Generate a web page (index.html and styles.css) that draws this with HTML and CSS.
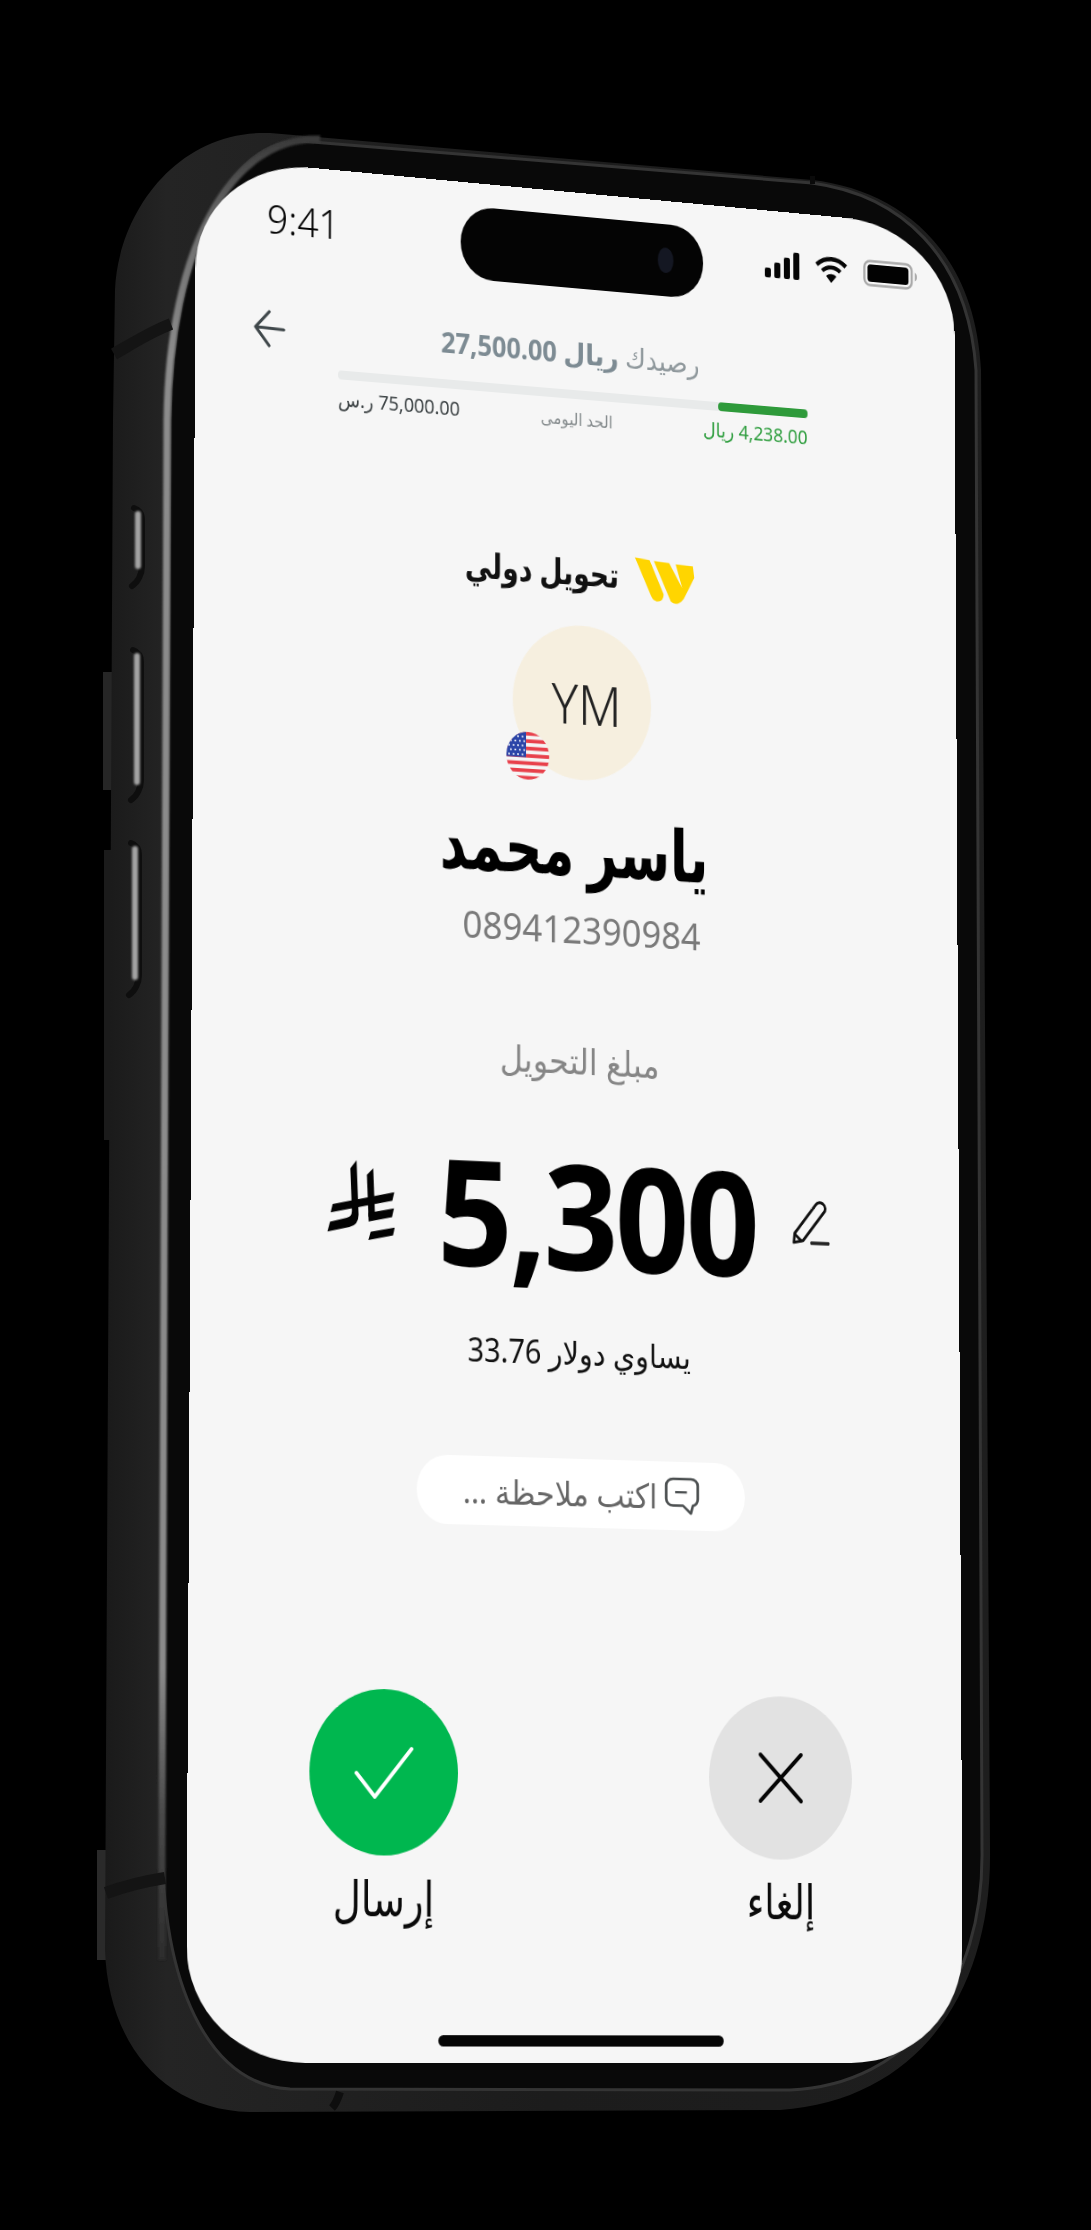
FILE: index.html
```html
<!DOCTYPE html>
<html lang="ar">
<head>
<meta charset="utf-8">
<title>تحويل دولي</title>
<link rel="stylesheet" href="styles.css">
</head>
<body>
<main class="stage">
  <svg class="shell" viewBox="0 0 1091 2230" width="1091" height="2230" aria-hidden="true">
    <defs>
      <linearGradient id="bodyGrad" x1="0" y1="0" x2="1" y2="0">
        <stop offset="0" stop-color="#1a1a1a"/>
        <stop offset="0.07" stop-color="#242424"/>
        <stop offset="0.5" stop-color="#1c1c1c"/>
        <stop offset="1" stop-color="#1e1e1e"/>
      </linearGradient>
      <linearGradient id="edgeFade" x1="0" y1="0" x2="0" y2="1">
        <stop offset="0" stop-color="#3a3a3a"/>
        <stop offset="0.05" stop-color="#6e6e6e"/>
        <stop offset="0.12" stop-color="#8c8c8c"/>
        <stop offset="0.84" stop-color="#8a8a8a"/>
        <stop offset="0.92" stop-color="#4a4a4a"/>
        <stop offset="1" stop-color="#2c2c2c"/>
      </linearGradient>
      <filter id="soft" filterUnits="userSpaceOnUse" x="0" y="0" width="1091" height="2230"><feGaussianBlur stdDeviation="1.1"/></filter>
    </defs>
    <rect x="103" y="672" width="11" height="118" fill="#262626"/>
    <rect x="104" y="850" width="9" height="290" fill="#1b1b1b"/>
    <rect x="97" y="1850" width="10" height="110" fill="#2a2a2a"/>
    <path d="M113 420 L115 290 C118 215 175 130 270 133 L812 180 C900 190 975 250 981 370 L990 1850 C992 1990 920 2100 780 2110 L250 2112 C160 2110 108 2040 105 1950 Z" fill="url(#bodyGrad)"/>
    <path d="M170 420 C172 250 230 140 300 141 L812 183 C900 195 968 255 976 370 L982 1850 C984 1985 910 2085 790 2090 L290 2089 C215 2085 165 2000 162 1850 Z" fill="#090909" stroke="#343434" stroke-width="3"/>
    <path d="M162 1960 L162 1850 L167 420 C169 250 230 136 320 139" fill="none" stroke="url(#edgeFade)" stroke-width="7" filter="url(#soft)"/>
    <path d="M114 354 C135 342 150 332 171 324" fill="none" stroke="#141414" stroke-width="12"/>
    <path d="M106 1893 C125 1886 140 1882 165 1878" fill="none" stroke="#141414" stroke-width="12"/>
    <path d="M340 2092 C338 2098 336 2104 332 2108" fill="none" stroke="#0e0e0e" stroke-width="8"/>
    <rect x="810" y="176" width="5" height="8" fill="#0a0a0a"/>
    <g fill="none" stroke-linecap="round">
      <path d="M134 508 C140 510 142 514 142 520 L142 566 C142 574 138 582 132 586" stroke="#0e0e0e" stroke-width="6"/>
      <path d="M138 514 L138 566" stroke="#a2a2a2" stroke-width="6" filter="url(#soft)"/>
      <path d="M133 650 C139 652 141 656 141 662 L141 780 C141 788 137 796 131 800" stroke="#0e0e0e" stroke-width="6"/>
      <path d="M137 656 L137 782" stroke="#a2a2a2" stroke-width="6" filter="url(#soft)"/>
      <path d="M131 843 C137 845 139 849 139 855 L139 975 C139 983 135 991 129 995" stroke="#0e0e0e" stroke-width="6"/>
      <path d="M135 849 L135 977" stroke="#a2a2a2" stroke-width="6" filter="url(#soft)"/>
    </g>
  </svg>

  <section class="screen" dir="rtl">
    <div class="status" dir="ltr">
      <span class="time">9:41</span>
      <div class="island"><i class="lens"></i></div>
      <div class="status-icons">
        <svg class="ico-signal" viewBox="0 0 40 28" width="40" height="28"><g fill="#050505"><rect x="0" y="18" width="7" height="10" rx="2"/><rect x="11" y="12" width="7" height="16" rx="2"/><rect x="22" y="6" width="7" height="22" rx="2"/><rect x="33" y="0" width="7" height="28" rx="2"/></g></svg>
        <svg class="ico-wifi" viewBox="0 0 38 28" width="38" height="28"><g fill="none" stroke="#050505" stroke-width="4.4"><path d="M2 10 C12 1 26 1 36 10"/><path d="M8.5 16 C14.5 10.5 23.5 10.5 29.5 16"/></g><path d="M13 21 C16.5 18 21.5 18 25 21 L19 28 Z" fill="#050505"/></svg>
        <svg class="ico-batt" viewBox="0 0 62 28" width="66" height="28" preserveAspectRatio="none"><rect x="1.5" y="1.5" width="52" height="25" rx="6.5" fill="none" stroke="#a9a9a9" stroke-width="2.4"/><rect x="5" y="5" width="45" height="18" rx="3.5" fill="#020202"/><path d="M57 9.5 C60 10.5 60 17.5 57 18.5 Z" fill="#a9a9a9"/></svg>
      </div>
    </div>

    <header class="limits" dir="ltr">
      <svg class="back" viewBox="0 0 36 38" width="36" height="38"><path d="M34 19 L3 18 M18 2 L3 18 L18 36" fill="none" stroke="#3f474a" stroke-width="3.2" stroke-linecap="round" stroke-linejoin="round"/></svg>
      <p class="balance" dir="rtl"><span>رصيدك</span> <b>ريال 27,500.00</b></p>
      <div class="track"><div class="fill"></div></div>
      <div class="limit-labels">
        <span class="lim-max" dir="rtl">75,000.00 ر.س</span>
        <span class="lim-name" dir="rtl">الحد اليومى</span>
        <span class="lim-used" dir="rtl">4,238.00 ريال</span>
      </div>
    </header>

    <div class="brand" dir="ltr">
      <span class="brand-name" dir="rtl">تحويل دولي</span>
      <svg class="logo" viewBox="38 33 186 156" width="69" height="48" preserveAspectRatio="none"><g fill="#ffd500"><path d="M40 35 L85 40 L128 150 Q128 175 107 175 Q95 173 90 160 Z"/><path d="M98 42 L145 45 L185 125 L165 48 L218 50 L222 88 L190 160 Q170 190 150 172 Z"/></g></svg>
    </div>

    <div class="avatar">
      <span class="initials">YM</span>
      <svg class="flag" viewBox="0 0 48 48" width="48" height="48">
        <defs><clipPath id="flagClip"><circle cx="24" cy="24" r="24"/></clipPath></defs>
        <g clip-path="url(#flagClip)">
          <rect width="48" height="48" fill="#f5f5f5"/>
          <g fill="#e8404b"><rect y="0" width="48" height="3.7"/><rect y="7.4" width="48" height="3.7"/><rect y="14.8" width="48" height="3.7"/><rect y="22.2" width="48" height="3.7"/><rect y="29.6" width="48" height="3.7"/><rect y="37" width="48" height="3.7"/><rect y="44.4" width="48" height="3.7"/></g>
          <rect width="22" height="25.5" fill="#2b45a8"/>
          <g fill="#e8ecf7"><circle cx="8" cy="5" r="1.1"/><circle cx="13" cy="5" r="1.1"/><circle cx="18" cy="5" r="1.1"/><circle cx="5" cy="9.5" r="1.1"/><circle cx="10" cy="9.5" r="1.1"/><circle cx="15" cy="9.5" r="1.1"/><circle cx="20" cy="9.5" r="1.1"/><circle cx="3" cy="14" r="1.1"/><circle cx="8" cy="14" r="1.1"/><circle cx="13" cy="14" r="1.1"/><circle cx="18" cy="14" r="1.1"/><circle cx="5" cy="18.5" r="1.1"/><circle cx="10" cy="18.5" r="1.1"/><circle cx="15" cy="18.5" r="1.1"/><circle cx="20" cy="18.5" r="1.1"/><circle cx="3" cy="23" r="1.1"/><circle cx="8" cy="23" r="1.1"/><circle cx="13" cy="23" r="1.1"/><circle cx="18" cy="23" r="1.1"/></g>
        </g>
      </svg>
    </div>

    <h1 class="name">ياسر محمد</h1>
    <p class="account">089412390984</p>
    <p class="amount-label">مبلغ التحويل</p>

    <div class="amount" dir="ltr">
      <svg class="riyal" viewBox="15 28 212 250" width="76" height="80" preserveAspectRatio="none"><g transform="rotate(-2.3 120 150)" fill="#030303"><path d="M115 30 L95 55 L95 185 Q95 204 78 208 L27 220 L18 250 L85 236 Q115 230 115 195 Z"/><path d="M165 55 L145 75 L145 205 L165 200 Z"/><path d="M37 165 L227 128 L220 155 L30 191 Z"/><path d="M145 192 L224 178 L217 205 L145 219 Z"/><path d="M150 250 L224 238 L218 262 L142 276 Z"/></g></svg>
      <span class="value">5,300</span>
      <svg class="pencil" viewBox="0 0 44 44" width="47" height="46"><g fill="none" stroke="#111" stroke-width="2.8" stroke-linejoin="round" stroke-linecap="round"><path d="M2 41 L3 32 L26 4 C28 1 32 1 34 3 C37 5 37 9 35 11 L12 39 Z"/><path d="M3 33 L10 39"/></g><rect x="20" y="39.5" width="21" height="3.4" rx="1" fill="#222"/></svg>
    </div>

    <p class="equals"><span>يساوي دولار 33.76</span></p>

    <div class="note">
      <svg class="bubble" viewBox="0 0 36 40" width="40" height="38" preserveAspectRatio="none"><path d="M9 2 H27 C31 2 34 5 34 9 V23 C34 27 32 29 29 30 L27 38 L19 30 H9 C5 30 2 27 2 23 V9 C2 5 5 2 9 2 Z" fill="none" stroke="#4b4f50" stroke-width="2.6" stroke-linejoin="round"/><path d="M11 16 H23" stroke="#4b4f50" stroke-width="2.4"/></svg>
      <span>اكتب ملاحظة ...</span>
    </div>

    <div class="actions" dir="ltr">
      <div class="action">
        <div class="round round-send"><svg viewBox="0 0 66 52" width="66" height="52"><path d="M3 27 L23 50 L63 3" fill="none" stroke="#fff" stroke-width="4" stroke-linecap="round" stroke-linejoin="round"/></svg></div>
        <span class="action-label" dir="rtl">إرسال</span>
      </div>
      <div class="action">
        <div class="round round-cancel"><svg viewBox="0 0 52 52" width="52" height="52"><path d="M3 3 L49 49 M49 3 L3 49" fill="none" stroke="#050505" stroke-width="4" stroke-linecap="round"/></svg></div>
        <span class="action-label" dir="rtl">إلغاء</span>
      </div>
    </div>

    <div class="home"></div>
  </section>
</main>
</body>
</html>
```

FILE: styles.css
```css
* { box-sizing: border-box; }

html, body {
  margin: 0;
  padding: 0;
  background: #000;
}

body {
  font-family: "Noto Sans", "DejaVu Sans", sans-serif;
  color: #050505;
}

p, h1 { margin: 0; }

.stage {
  position: relative;
  width: 1091px;
  height: 2230px;
  overflow: hidden;
  background: #000;
}

.shell {
  position: absolute;
  left: 0;
  top: 0;
}

.screen {
  position: absolute;
  left: 0;
  top: 0;
  width: 860px;
  height: 1870px;
  padding-top: 24px;
  display: flex;
  flex-direction: column;
  align-items: center;
  background: #f6f6f6;
  border-radius: 128px / 112px;
  overflow: hidden;
  transform-origin: 0 0;
  transform: matrix3d(0.92432, 0.092816, 0, 0.000044991,
                      -0.007825, 0.99178, 0, -0.000013316,
                      0, 0, 1, 0,
                      196, 157, 0, 1);
}

/* status bar */
.status {
  width: 100%;
  height: 74px;
  display: grid;
  grid-template-columns: 1fr 275px 1fr;
  align-items: center;
}

.time {
  padding-left: 78px;
  padding-bottom: 14px;
  font-size: 41px;
  font-weight: 300;
  line-height: 1;
}

.island {
  position: relative;
  height: 74px;
  border-radius: 37px;
  background: #040404;
}

.lens {
  position: absolute;
  right: 34px;
  top: 24px;
  width: 18px;
  height: 26px;
  border-radius: 50%;
  background: #141722;
}

.status-icons {
  display: flex;
  align-items: center;
  justify-content: flex-end;
  gap: 18px;
  padding-right: 41px;
  padding-bottom: 12px;
}

/* header with balance and daily limit */
.limits {
  width: 100%;
  margin-top: 44px;
  display: grid;
  grid-template-columns: 157px 531px;
  grid-template-rows: 48px auto auto;
  align-items: center;
}

.back {
  grid-column: 1;
  grid-row: 1;
  margin-left: 63px;
}

.balance {
  grid-column: 2;
  grid-row: 1;
  text-align: center;
  padding-right: 10px;
  padding-bottom: 4px;
  font-size: 28.5px;
  line-height: 44px;
  color: #8f989c;
  white-space: nowrap;
}

.balance b {
  color: #7d8b93;
  font-weight: 700;
}

.track {
  grid-column: 2;
  grid-row: 2;
  margin-top: 12px;
  height: 9px;
  border-radius: 4px;
  background: #e8eaea;
  display: flex;
  justify-content: flex-end;
}

.fill {
  width: 103px;
  height: 9px;
  border-radius: 4px;
  background: #2e9a3a;
}

.limit-labels {
  grid-column: 2;
  grid-row: 3;
  margin-top: 5px;
  height: 28px;
  display: flex;
  justify-content: space-between;
  align-items: center;
  white-space: nowrap;
}

.lim-max { font-size: 20px; color: #3c4244; }
.lim-name { font-size: 17px; color: #858b8d; padding-right: 12px; padding-top: 2px; }
.lim-used { font-size: 20px; color: #2f9e3f; }

/* beneficiary */
.brand {
  margin-top: 122px;
  height: 50px;
  padding-right: 4px;
  display: flex;
  align-items: center;
  justify-content: center;
  gap: 17px;
}

.brand-name {
  display: inline-block;
  margin-bottom: 10px;
  font-size: 30px;
  font-weight: 600;
  color: #111;
  white-space: nowrap;
  transform: scaleY(1.18);
}

.avatar {
  position: relative;
  margin-top: 25px;
  width: 156px;
  height: 156px;
  border-radius: 50%;
  background: #f6efdf;
  display: flex;
  align-items: center;
  justify-content: center;
  font-size: 56px;
  font-weight: 300;
  color: #222;
}

.initials {
  padding-left: 10px;
}

.flag {
  position: absolute;
  left: -7px;
  bottom: -3px;
}

.name {
  margin-top: 29px;
  height: 80px;
  padding-right: 16px;
  font-size: 58px;
  font-weight: 700;
  line-height: 80px;
  color: #000;
  white-space: nowrap;
  transform: scaleY(1.24);
}

.account {
  margin-top: 16px;
  height: 50px;
  font-size: 39px;
  line-height: 50px;
  color: #7a7a7a;
}

.amount-label {
  margin-top: 82px;
  height: 50px;
  padding-right: 5px;
  font-size: 35.5px;
  line-height: 50px;
  color: #868686;
}

/* amount */
.amount {
  margin-top: 47px;
  height: 170px;
  display: flex;
  align-items: center;
  justify-content: center;
}

.riyal { margin-bottom: 16px; }
.pencil { margin-bottom: 8px; }

.value {
  margin: 0 40px 6px 47px;
  font-size: 146px;
  font-weight: 700;
  line-height: 170px;
  letter-spacing: -3.5px;
  color: #000;
}

.equals {
  margin-top: 27px;
  height: 46px;
  padding-right: 5px;
  font-size: 32px;
  line-height: 46px;
  color: #111;
  white-space: nowrap;
}

/* note pill */
.note {
  margin-top: 82px;
  width: 366px;
  height: 68px;
  border-radius: 34px;
  background: #fff;
  display: flex;
  align-items: center;
  justify-content: center;
  gap: 8px;
  font-size: 33.5px;
  color: #666;
}

/* action buttons */
.actions {
  margin-top: 163px;
  width: 100%;
  padding: 0 126px 0 131px;
  display: flex;
  justify-content: space-between;
}

.action {
  width: 162px;
  display: flex;
  flex-direction: column;
  align-items: center;
}

.round {
  width: 162px;
  height: 162px;
  border-radius: 50%;
  display: flex;
  align-items: center;
  justify-content: center;
}

.round-send { background: #00b74f; }
.round-cancel { background: #e2e2e2; }

.action-label {
  margin-top: 11px;
  margin-bottom: 8px;
  height: 60px;
  font-size: 42px;
  line-height: 60px;
  color: #0a0a0a;
  transform: scaleY(1.14);
}

.home {
  margin-top: 95px;
  width: 316px;
  height: 11px;
  border-radius: 6px;
  background: #050505;
}
```
